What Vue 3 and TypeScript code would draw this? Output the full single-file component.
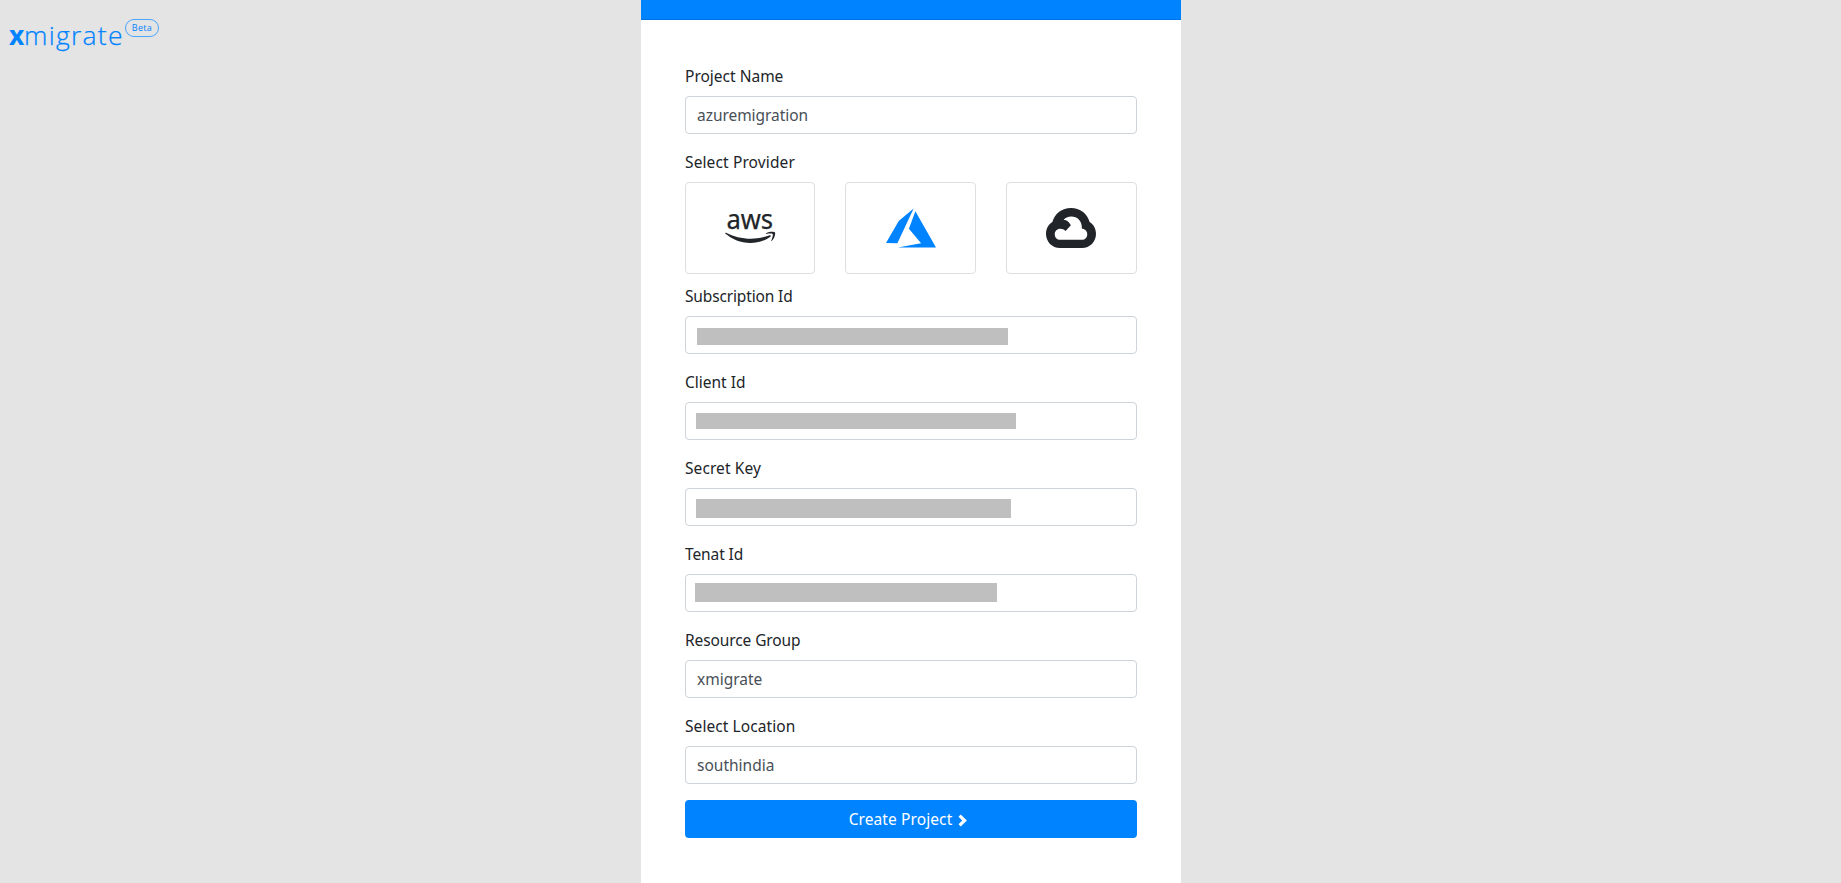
<script setup lang="ts">
interface Field {
  id: string
  label: string
  value?: string
}

const fields: Field[] = [
  { id: 'subscription', label: 'Subscription Id' },
  { id: 'client', label: 'Client Id' },
  { id: 'secret', label: 'Secret Key' },
  { id: 'tenant', label: 'Tenat Id' },
  { id: 'resource', label: 'Resource Group', value: 'xmigrate' },
  { id: 'location', label: 'Select Location', value: 'southindia' },
]
</script>

<template>
  <div class="page">
    <header class="brand">
      <span class="brand-x">x</span><span class="brand-rest">migrate</span>
      <span class="beta">Beta</span>
    </header>
    <main class="panel">
      <div class="progress"></div>
      <form class="form" @submit.prevent>
        <div class="group">
          <label class="label name">Project Name</label>
          <div class="control"><span class="value project">azuremigration</span></div>
        </div>
        <label class="label provider">Select Provider</label>
        <div class="providers">
          <div class="card">
            <svg class="logo" viewBox="0 0 24 24">
              <text class="aws" x="2.55" y="12.2" textLength="18.7" lengthAdjust="spacingAndGlyphs">aws</text>
              <path transform="translate(0 -1.4)" d="M20.16 16.89C18 18.5 14.82 19.36 12.1 19.36C8.29 19.36 4.85 17.95 2.1 15.61C1.9 15.43 2.1 15.18 2.4 15.32C5.28 16.84 8.75 17.73 12.33 17.73C14.75 17.73 17.4 17.3 19.84 16.3C20.21 16.13 20.53 16.63 20.16 16.89M21.07 15.85C20.79 15.5 19.22 15.68 18.5 15.77C18.31 15.79 18.28 15.61 18.47 15.5C19.71 14.62 21.75 14.8 22 15.12C22.22 15.46 21.93 17.56 20.77 18.54C20.59 18.69 20.42 18.61 20.5 18.41C20.77 17.76 21.35 16.23 21.07 15.85Z" />
            </svg>
          </div>
          <div class="card">
            <svg class="logo azure" viewBox="0 0 24 24">
              <path d="M13.05 4.24L6.56 18.05L2 18L7.09 9.24L13.05 4.24M13.75 5.33L22 19.76H6.74L16.04 18.1L11.17 12.31L13.75 5.33Z" />
            </svg>
          </div>
          <div class="card google">
            <svg class="logo" viewBox="0 0 24 24">
              <path fill-rule="evenodd" d="M4.55 9.6C5.5 6.2 8.4 4 12 4C15.6 4 18.5 6.2 19.45 9.6C21.1 10.7 22 12.3 22 14.3C22 17.5 19.6 20 16.4 20H7.6C4.4 20 2 17.5 2 14.3C2 12.3 2.9 10.7 4.55 9.6ZM8.95 8.85C10.2 8.8 10.8 9.25 11.95 10.85L9.85 13.2C9.2 12.5 8.5 12.25 7.7 12.25C6.4 12.25 5.5 13.2 5.5 14.45C5.5 15.7 6.4 16.7 7.7 16.7H16.4C17.6 16.7 18.5 15.7 18.5 14.45C18.5 13.2 17.6 12.25 16.35 12.25C16.5 9.2 14.6 7.4 12.1 7.4C10.8 7.4 9.7 7.9 8.95 8.85Z" />
            </svg>
          </div>
        </div>
        <div v-for="f in fields" :key="f.id" class="group">
          <label class="label" :class="f.id">{{ f.label }}</label>
          <div class="control">
            <span v-if="f.value" class="value" :class="f.id">{{ f.value }}</span>
            <span v-else class="mask" :class="f.id"></span>
          </div>
        </div>
        <button class="submit" type="submit">
          <span class="submit-text">Create Project</span>
          <svg class="chevron" viewBox="0 0 9 13"><path d="M1.6 1.6L6.6 6.5L1.6 11.4" /></svg>
        </button>
      </form>
    </main>
  </div>
</template>

<style>
body {
  margin: 0;
  background: #e4e4e4;
}
</style>

<style scoped>
.page {
  position: relative;
  height: 883px;
  overflow: hidden;
  display: flex;
  justify-content: center;
  padding-right: 19px;
  box-sizing: border-box;
  background: #e4e4e4;
  font-family: "Noto Sans", "Open Sans", sans-serif;
  font-size: 15.5px;
  line-height: 24px;
  color: #212529;
}
.brand {
  position: absolute;
  left: 9px;
  top: 16px;
  display: flex;
  color: #0083ff;
  font-family: "Open Sans", sans-serif;
  font-size: 26.5px;
  line-height: 38px;
}
.brand-x {
  width: 15px;
  font-weight: 700;
}
.brand-rest {
  width: 101px;
  font-weight: 300;
  letter-spacing: 1.25px;
  -webkit-text-stroke: 0.25px #0083ff;
}
.beta {
  box-sizing: border-box;
  width: 34px;
  height: 18px;
  margin-top: 3px;
  border: 1px solid #4ba5fb;
  border-radius: 9px;
  font-size: 9px;
  line-height: 16px;
  letter-spacing: 0.3px;
  text-align: center;
}
.panel {
  width: 540px;
  background: #fff;
}
.progress {
  height: 20px;
  box-sizing: border-box;
  background: #0083ff;
  border-bottom: 1px solid #0074e3;
}
.form {
  padding: 44px 44px 0;
}
.group {
  margin-bottom: 16px;
}
.label {
  display: block;
  width: max-content;
  margin-bottom: 8px;
}
.label.provider {
  letter-spacing: 0.12px;
}
.label.subscription {
  letter-spacing: -0.15px;
}
.label.secret,
.label.location {
  letter-spacing: 0.08px;
}
.label.resource,
.label.tenant {
  letter-spacing: -0.1px;
}
.control {
  box-sizing: border-box;
  height: 38px;
  padding: 0 12px;
  border: 1px solid #ced4da;
  border-radius: 4px;
  display: flex;
  align-items: center;
  color: #495057;
}
.value {
  margin-left: -1px;
}
.value.project {
  letter-spacing: -0.05px;
}
.providers {
  display: grid;
  grid-template-columns: 130px 131px 131px;
  justify-content: space-between;
  margin-bottom: 10px;
}
.card {
  box-sizing: border-box;
  height: 92px;
  border: 1px solid #dedfe0;
  border-radius: 4px;
  display: flex;
  align-items: center;
  justify-content: center;
}
.card.google {
  padding-right: 1px;
}
.logo {
  width: 60px;
  height: 60px;
  fill: #212529;
}
.azure {
  fill: #0083ff;
}
.aws {
  font-family: "Noto Sans", sans-serif;
  font-size: 11px;
  font-weight: 400;
  stroke: #212529;
  stroke-width: 0.1px;
}
.mask {
  background: #bfbfbf;
}
.mask.subscription {
  width: 311px;
  height: 17px;
  margin: 2px 0 0 -1px;
}
.mask.client {
  width: 320px;
  height: 16px;
  margin-left: -2px;
}
.mask.secret {
  width: 315px;
  height: 19px;
  margin: 3px 0 0 -2px;
}
.mask.tenant {
  width: 302px;
  height: 19px;
  margin: 0 0 1px -3px;
}
.submit {
  display: flex;
  align-items: center;
  justify-content: center;
  width: 100%;
  height: 38px;
  padding: 0 6px 0 0;
  border: 0;
  border-radius: 4px;
  background: #0083ff;
  color: #fff;
  font: inherit;
}
.submit-text {
  letter-spacing: 0.1px;
}
.chevron {
  width: 9px;
  height: 13px;
  margin: 3px 0 0 6px;
  fill: none;
  stroke: #fff;
  stroke-width: 3.2;
}
</style>
